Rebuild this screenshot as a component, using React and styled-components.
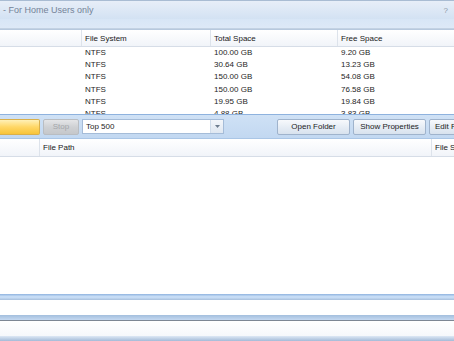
import styled, { createGlobalStyle } from 'styled-components';

const Global = createGlobalStyle`
  html, body {
    margin: 0;
    padding: 0;
    background: #ffffff;
  }
  body {
    font-family: "Liberation Sans", Arial, sans-serif;
    font-size: 8px;
    color: #1e1e1e;
  }
`;

const Window = styled.div`
  width: 454px;
  height: 341px;
  overflow: hidden;
  display: flex;
  flex-direction: column;
  background: #ffffff;
`;

const TitleBar = styled.div`
  height: 18px;
  flex: none;
  display: flex;
  align-items: center;
  justify-content: space-between;
  padding: 0 6px 0 3px;
  border-top: 1px solid #a9bcd3;
  background: linear-gradient(#e7eef8, #d3e2f3);
  color: #748398;
  font-size: 9px;
`;

const Help = styled.span`
  color: #8d98a6;
  font-size: 8px;
`;

const Band = styled.div`
  height: 9px;
  flex: none;
  background: linear-gradient(#d8e6f6, #dde9f7);
  border-bottom: 1px solid #c3d2e3;
`;

const HeadRow = styled.div`
  display: grid;
  grid-template-columns: ${p => p.cols};
  height: ${p => p.h}px;
  flex: none;
  background: linear-gradient(#ffffff, #f1f4f9);
  border-bottom: 1px solid #d6dde7;
  ${p => p.top && `border-top: 1px solid ${p.top};`}
`;

const HeadCell = styled.div`
  display: flex;
  align-items: center;
  padding-left: 3px;
  border-right: 1px solid #dde3eb;
  color: #202020;
  white-space: nowrap;
  overflow: hidden;
  &:last-child {
    border-right: none;
  }
`;

const Body = styled.div`
  height: 67px;
  flex: none;
  overflow: hidden;
`;

const Row = styled.div`
  display: grid;
  grid-template-columns: 82px 129px 127px 1fr;
  height: 12.2px;
  align-items: center;
`;

const Cell = styled.div`
  padding-left: 3px;
  white-space: nowrap;
  line-height: 12px;
`;

const Toolbar = styled.div`
  height: 23px;
  flex: none;
  display: flex;
  align-items: center;
  gap: 3px;
  border-top: 1px solid #8eb2de;
  border-bottom: 1px solid #aac6e6;
  background: linear-gradient(#cfe1f5, #c2d8f1);
`;

const Btn = styled.div`
  height: 16px;
  width: ${p => p.w}px;
  flex: none;
  display: flex;
  align-items: center;
  justify-content: center;
  box-sizing: border-box;
  border: 1px solid #9fb3cc;
  border-radius: 2px;
  background: linear-gradient(#f7f9fc, #e6edf5 50%, #d8e2ee);
  color: #1c1c1c;
  white-space: nowrap;
  overflow: hidden;
`;

const EdgeBtn = styled(Btn)`
  justify-content: flex-start;
  padding-left: 5px;
  margin-right: -15px;
`;

const GoBtn = styled(Btn)`
  border-color: #d9b04c;
  border-left: none;
  border-radius: 0 2px 2px 0;
  background: linear-gradient(#fff1b8, #ffd766 50%, #f8c43a);
`;

const StopBtn = styled(Btn)`
  border-color: #b9bdc2;
  background: linear-gradient(#e4e5e7, #cfd1d4 50%, #c5c7ca);
  color: #a3a6aa;
`;

const Combo = styled.div`
  width: 142px;
  height: 15px;
  flex: none;
  box-sizing: border-box;
  display: flex;
  align-items: center;
  border: 1px solid #a5bcd8;
  background: #ffffff;
`;

const ComboText = styled.span`
  flex: 1;
  padding-left: 3px;
`;

const ComboArrow = styled.div`
  width: 12px;
  height: 100%;
  display: flex;
  align-items: center;
  justify-content: center;
  border-left: 1px solid #d0dcea;
  background: linear-gradient(#f3f6fa, #dfe7f1);
`;

const Spacer = styled.div`
  flex: 1;
`;

const Blank = styled.div`
  flex: 1;
  background: #ffffff;
`;

const Stripe = styled.div`
  height: ${p => p.h}px;
  flex: none;
  background: ${p => p.bg};
  ${p => p.bottom && `border-bottom: 1px solid ${p.bottom};`}
`;

const Gap = styled.div`
  height: ${p => p.h}px;
  flex: none;
  background: ${p => p.bg || '#ffffff'};
`;

const drives = [
  ['NTFS', '100.00 GB', '9.20 GB'],
  ['NTFS', '30.64 GB', '13.23 GB'],
  ['NTFS', '150.00 GB', '54.08 GB'],
  ['NTFS', '150.00 GB', '76.58 GB'],
  ['NTFS', '19.95 GB', '19.84 GB'],
  ['NTFS', '4.88 GB', '3.83 GB'],
];

export default function App() {
  return (
    <>
      <Global />
      <Window>
        <TitleBar>
          <span>- For Home Users only</span>
          <Help>?</Help>
        </TitleBar>
        <Band />
        <HeadRow cols="82px 129px 127px 1fr" h={16} top="#b7c9de">
          <HeadCell />
          <HeadCell>File System</HeadCell>
          <HeadCell>Total Space</HeadCell>
          <HeadCell>Free Space</HeadCell>
        </HeadRow>
        <Body>
          {drives.map((d, i) => (
            <Row key={i}>
              <Cell />
              <Cell>{d[0]}</Cell>
              <Cell>{d[1]}</Cell>
              <Cell>{d[2]}</Cell>
            </Row>
          ))}
        </Body>
        <Toolbar>
          <GoBtn w={40} />
          <StopBtn w={36}>Stop</StopBtn>
          <Combo>
            <ComboText>Top 500</ComboText>
            <ComboArrow>
              <svg width="5" height="3" viewBox="0 0 5 3">
                <path d="M0 0h5L2.5 3z" fill="#6d7c8e" />
              </svg>
            </ComboArrow>
          </Combo>
          <Spacer />
          <Btn w={73}>Open Folder</Btn>
          <Btn w={73}>Show Properties</Btn>
          <EdgeBtn w={40}>Edit File</EdgeBtn>
        </Toolbar>
        <HeadRow cols="40px 392px 1fr" h={17}>
          <HeadCell />
          <HeadCell>File Path</HeadCell>
          <HeadCell>File Size</HeadCell>
        </HeadRow>
        <Blank />
        <Stripe h={6} bg="linear-gradient(#8fb3df, #c6dcf5 40%, #c6dcf5 60%, #a7bfdc)" />
        <Gap h={15} />
        <Stripe h={5} bg="linear-gradient(#a3bedd, #c4d9f1)" bottom="#7d8794" />
        <Gap h={15} bg="linear-gradient(#ffffff, #f6f8fb)" />
        <Stripe h={5} bg="linear-gradient(#dde8f5, #a4bbd8)" />
      </Window>
    </>
  );
}
